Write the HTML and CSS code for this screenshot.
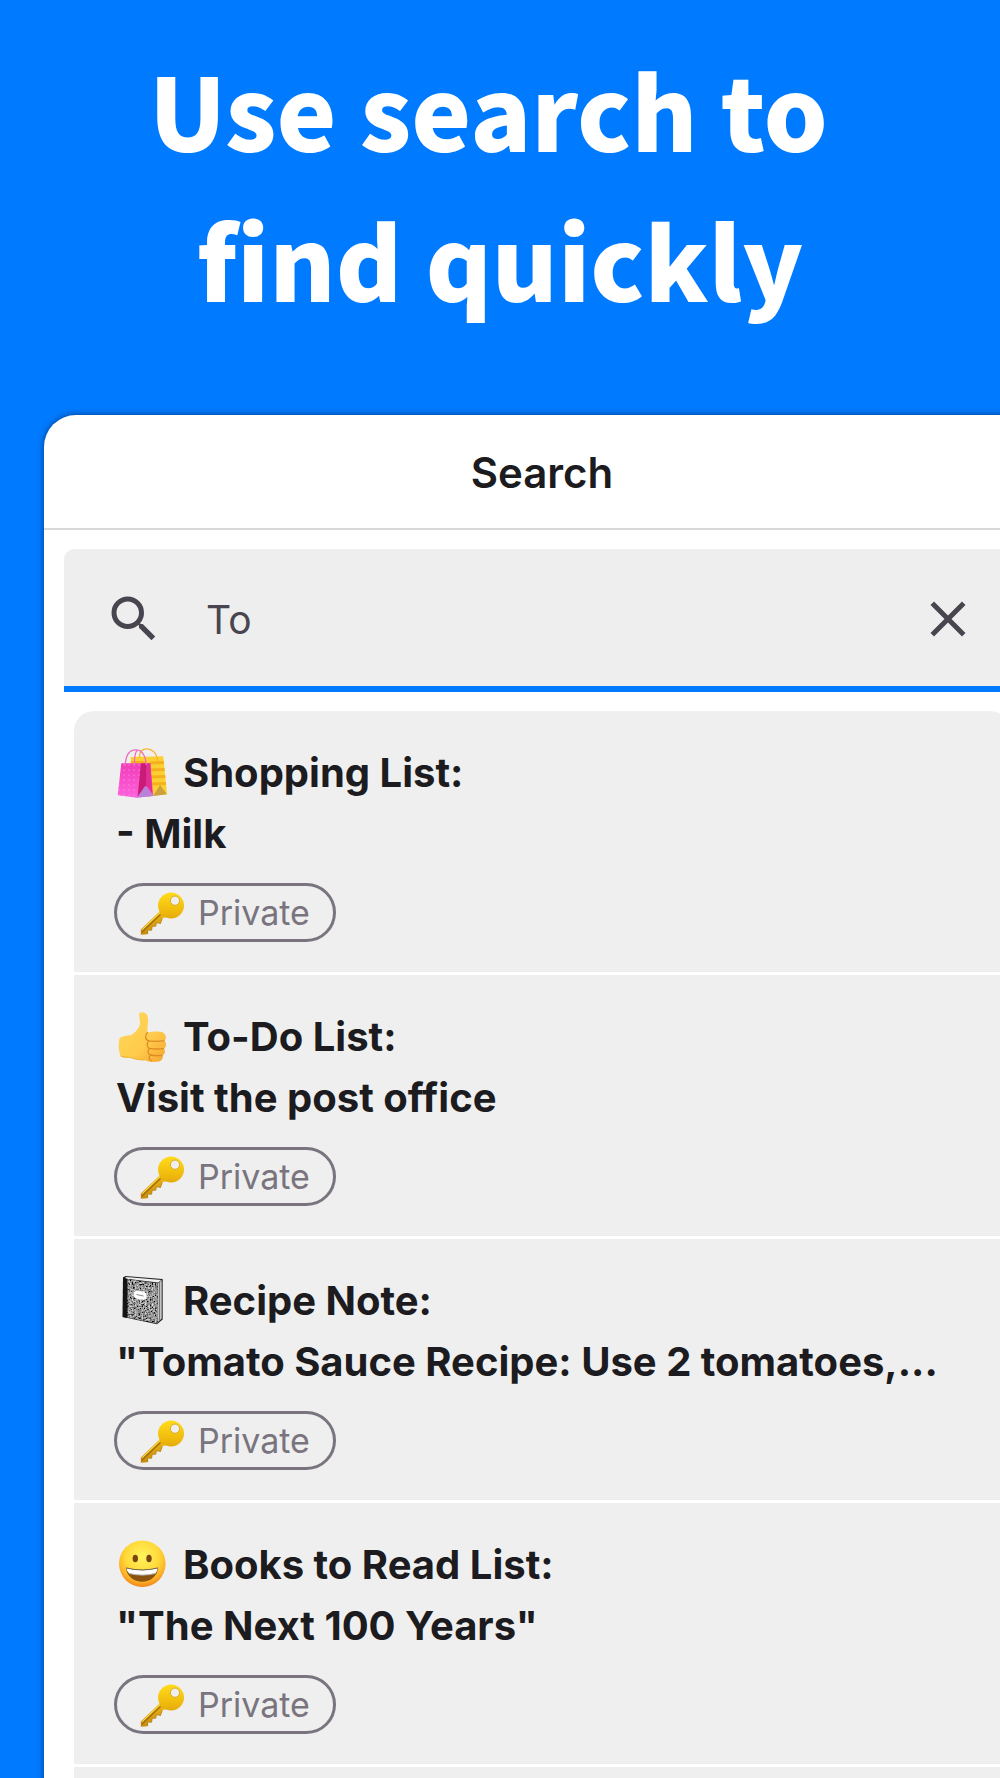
FILE: index.html
```html
<!DOCTYPE html>
<html lang="en">
  <head>
    <meta charset="utf-8">
    <meta name="viewport" content="width=device-width, initial-scale=1">
    <title>Search</title>
    <link rel="stylesheet" href="styles.css">
  </head>
  <body>

    <!-- shared icons -->
    <svg class="sprite" aria-hidden="true">
      <defs>
        <linearGradient id="keyGold" x1="0" y1="0" x2="0" y2="1">
          <stop offset="0" stop-color="#ffdc1c"/>
          <stop offset="0.45" stop-color="#efb90c"/>
          <stop offset="1" stop-color="#c58a12"/>
        </linearGradient>
        <linearGradient id="pinkBag" x1="0" y1="0" x2="0" y2="1">
          <stop offset="0" stop-color="#f03cb8"/>
          <stop offset="1" stop-color="#ff62dc"/>
        </linearGradient>
        <pattern id="dots" width="5" height="5" patternUnits="userSpaceOnUse">
          <circle cx="2" cy="2" r="0.6" fill="#ffb0ee"/>
        </pattern>
        <linearGradient id="thumbSkin" x1="0" y1="0" x2="1" y2="1">
          <stop offset="0" stop-color="#ffd95a"/>
          <stop offset="0.6" stop-color="#ffcb4c"/>
          <stop offset="1" stop-color="#f5a52e"/>
        </linearGradient>
        <radialGradient id="faceFill" cx="0.5" cy="0.35" r="0.66">
          <stop offset="0" stop-color="#fff45c"/>
          <stop offset="0.55" stop-color="#ffd93a"/>
          <stop offset="0.8" stop-color="#fdb327"/>
          <stop offset="1" stop-color="#ee8218"/>
        </radialGradient>
        <filter id="marble" x="0" y="0" width="1" height="1">
          <feTurbulence type="fractalNoise" baseFrequency="0.6" numOctaves="2" seed="4"/>
          <feColorMatrix type="matrix" values="1.5 0 0 0 -0.45  1.5 0 0 0 -0.45  1.5 0 0 0 -0.45  0 0 0 0 1"/>
          <feComposite in2="SourceGraphic" operator="in"/>
        </filter>
      </defs>
      <symbol id="key" viewBox="0 0 44 44">
        <path fill="url(#keyGold)" d="M19.500 20.500 0.800 38.600V43.800L7.700 43.300 8 39 11.500 39.300 12.300 35.300 15.800 35.200 16.400 31.600 20.500 32.500 22.300 26.800 26 26.500A13 13 0 1 0 19.500 20.500Z"/>
        <path fill="none" stroke="#9d6a12" stroke-width="1.200" d="M1.500 41.500 20.500 23.500"/>
        <path fill="none" stroke="#ffe35a" stroke-width="1" d="M2 38.800 20 21.500"/>
        <path fill="none" stroke="#b67b10" stroke-width="0.800" d="M7.700 43V39L11.500 39.300 12.300 35.300 15.800 35.200 16.400 31.600 20.500 32.500 22.300 27"/>
        <circle cx="35" cy="9.700" r="4.600" fill="#efefef" stroke="#d39e0c" stroke-width="0.800"/>
      </symbol>
    </svg>

    <h1 class="headline">Use search to&nbsp;<br>find quickly</h1>

    <main class="sheet">
      <header class="sheet-header">
        <h2>Search</h2>
      </header>

      <form class="search-bar" role="search">
        <label for="searchInput" aria-label="Search notes">
          <svg class="icon" viewBox="0 0 24 24">
            <path fill="currentColor" d="M15.500 14h-.79l-.28-.27A6.470 6.470 0 0 0 16 9.500 6.500 6.500 0 1 0 9.500 16c1.610 0 3.090-.59 4.230-1.570l.27.28v.79l5 4.990L20.490 19l-4.990-5zm-6 0C7.010 14 5 11.990 5 9.500S7.010 5 9.500 5 14 7.010 14 9.500 11.990 14 9.500 14z"/>
          </svg>
        </label>
        <input type="text" id="searchInput" class="search-input" value="To">
        <button type="button" class="clear-button" aria-label="Clear">
          <svg class="icon" viewBox="0 0 24 24">
            <path fill="currentColor" d="M19 6.410 17.590 5 12 10.590 6.410 5 5 6.410 10.590 12 5 17.590 6.410 19 12 13.410 17.590 19 19 17.590 13.410 12z"/>
          </svg>
        </button>
      </form>

      <ul class="results">
        <li class="result">
          <h3 class="result-title">
            <svg class="emoji" viewBox="0 0 50 50" aria-hidden="true">
              <path fill="#fdd032" d="M13.700 9 46.300 8.300 50 46.300 36 48 14 40Z"/>
              <path fill="#f5b01e" d="M33 13.500 46.800 13 47.100 16 33 16.500ZM33 20.500 47.500 20 47.800 23 34 23.500ZM34 27.500 48.200 27 48.500 30 34 30.500ZM35 34.500 48.900 34 49.100 37 35 37.500ZM14 13h15v2H14Z"/>
              <path fill="#c9a23c" d="M36 48 43 37 50 46.300Z"/>
              <path fill="none" stroke="#fbb42c" stroke-width="1.300" d="M22.500 10C22 3 26 .8 30 .8S40 4 40.700 13"/>
              <path fill="url(#pinkBag)" d="M4.300 15.300 33.300 15.300 36.300 48 19.700 49.700 .7 47.300Z"/>
              <path fill="url(#dots)" d="M4.300 15.300H24L20 49.700 .7 47.300Z"/>
              <path fill="#c91c78" d="M24 15.300H29.500L30 38 20.500 49Z"/>
              <path fill="#e22f95" d="M29.500 15.300H33.300L35.500 46 29 37Z"/>
              <path fill="#b882d8" d="M20 49.600 28.500 37.500 36.300 48Z"/>
              <path fill="none" stroke="#ef6cbc" stroke-width="1.300" d="M8.300 18C8.500 8 12 2 18.500 1.800S28.500 8 29.300 17M17.500 17C17.500 8 18 3 20.500 2.500"/>
            </svg>
            Shopping List:
          </h3>
          <p class="result-text">- Milk</p>
          <span class="tag"><svg class="tag-icon" aria-hidden="true"><use href="#key"/></svg>Private</span>
        </li>

        <li class="result">
          <h3 class="result-title">
            <svg class="emoji" viewBox="0 0 50 50" aria-hidden="true">
              <path fill="url(#thumbSkin)" d="M22 2C23-.5 28-.5 30 3 32.500 8 30 14 30.300 20L32 20.500C36 19 44 19.300 46 20.500 49.500 22.500 49.300 27 47.500 28.800 49.800 31 49.500 35 47 36.700 48.800 39 48 42.500 45.500 43.500 46.500 46 45 49 42 49.500 37 50.500 31 50 27 48 20 48.500 17 46 12 45.500 8 46 5.500 46 3.700 44 1.500 40 1 32 2.500 26.500 4.500 24 10 23.500 14 23.300 19 20 23.500 15 23 10Z"/>
              <path fill="none" stroke="#dd8d22" stroke-width="1.300" stroke-linecap="round" d="M30.500 20.500C27.500 23 28 28 32 28.900 37 29.600 43 29.300 47 28.900M32 28.900C29.500 31 29.500 35 32.500 36.400 37 37.200 43 37 46.500 36.700M32.500 36.400C30.300 38 30.500 42 33.500 43 37 43.800 42 43.700 45 43.500M33.500 43C31.500 44.500 31.800 48 34.500 49"/>
              <path fill="none" stroke="#f3b236" stroke-width="1.200" stroke-linecap="round" d="M4 44C8 46 12 44.500 16 46.300S24 47.500 27 48"/>
            </svg>
            To-Do List:
          </h3>
          <p class="result-text">Visit the post office</p>
          <span class="tag"><svg class="tag-icon" aria-hidden="true"><use href="#key"/></svg>Private</span>
        </li>

        <li class="result">
          <h3 class="result-title">
            <svg class="emoji" viewBox="0 0 50 50" aria-hidden="true">
              <path fill="#252525" d="M6 1.500 8.500 0 45.700 3V43.500L40 48.300 5.700 41Z"/>
              <path fill="#f0f0f0" d="M9 1 44.500 4 41 6.500 8 2.500Z"/>
              <path fill="#c4c4c4" d="M40.500 7.500 44.700 4.500V42.500L40.500 46.500Z"/>
              <path fill="#777" d="M42 6.500 43 5.800V44L42 45Z"/>
              <path fill="#666" filter="url(#marble)" d="M10 3 40.500 7.500V47.500L10 41.500Z"/>
              <path fill="#141414" d="M6 1.500 10.500 3V42L5.700 41Z"/>
              <path fill="#fff" d="M19 14.500 27 15.500Q28 17 29.500 17.300V23Q28 23 27.200 24L19 22.500Q18 21 16.500 20.500V16Q18 16 19 14.500Z"/>
              <path stroke="#888" stroke-width="1" d="M19.500 18.500 26.500 20"/>
            </svg>
            Recipe Note:
          </h3>
          <p class="result-text">"Tomato Sauce Recipe: Use 2 tomatoes,...</p>
          <span class="tag"><svg class="tag-icon" aria-hidden="true"><use href="#key"/></svg>Private</span>
        </li>

        <li class="result">
          <h3 class="result-title">
            <svg class="emoji" viewBox="0 0 50 50" aria-hidden="true">
              <circle cx="25.300" cy="23.700" r="23.300" fill="url(#faceFill)"/>
              <ellipse cx="18.300" cy="18.500" rx="2.700" ry="3.800" fill="#7a4410"/>
              <ellipse cx="32" cy="18.500" rx="2.700" ry="3.800" fill="#7a4410"/>
              <path fill="#8a5410" d="M9 28Q25.300 32 41 28C40.500 36.500 33 41.800 25.200 41.800S9.500 36.500 9 28Z"/>
              <path fill="#fff" d="M9.500 28.300Q25.300 32 40.500 28.300 40.300 31.500 38.500 33.300 25 36.500 12 33.300 9.800 31.500 9.500 28.300Z"/>
              <path fill="none" stroke="#6f5a4c" stroke-width="0.900" d="M9 27.900Q25.300 32 41 27.900"/>
              <path fill="none" stroke="#b9bcc4" stroke-width="0.900" d="M12 33.500Q25 36.700 38.500 33.500"/>
            </svg>
            Books to Read List:
          </h3>
          <p class="result-text">"The Next 100 Years"</p>
          <span class="tag"><svg class="tag-icon" aria-hidden="true"><use href="#key"/></svg>Private</span>
        </li>

        <li class="result"></li>
      </ul>
    </main>

  </body>
</html>
```

FILE: styles.css
```css
* {
  box-sizing: border-box;
}

html {
  height: 100%;
}

body {
  margin: 0;
  height: 100%;
  overflow: hidden;
  display: flex;
  flex-direction: column;
  background-color: #007aff;
  color: #1c1b20;
  font-family: Inter, "Liberation Sans", sans-serif;
}

h1, h2, h3, p {
  margin: 0;
}

.sprite {
  position: absolute;
  width: 0;
  height: 0;
}

.headline {
  padding: 33px 0 82px;
  color: #fff;
  font-family: "Noto Sans CJK SC", "Noto Sans", sans-serif;
  font-size: 101px;
  font-weight: 900;
  line-height: 150px;
  text-align: center;
}

/* the sheet runs off the right and bottom edges */
.sheet {
  flex: 1 0 auto;
  margin: 0 -40px 0 44px;
  background-color: #fff;
  border-radius: 32px 32px 0 0;
  box-shadow: 0 0 6px rgba(0, 0, 0, 0.5);
}

.sheet-header {
  padding: 29px 0 27px;
  border-bottom: 2px solid #d8d8d8;
  text-align: center;
}

.sheet-header h2 {
  font-size: 42px;
  font-weight: 600;
  line-height: 57px;
}

.search-bar {
  display: flex;
  align-items: center;
  height: 143px;
  margin: 19px 20px 19px;
  padding: 2px 42px 0 40px;
  background-color: #eee;
  border-bottom: 6px solid #007aff;
  border-radius: 10px 10px 0 0;
  color: #49454f;
}

.icon {
  display: block;
  width: 60px;
  height: 60px;
}

.search-input {
  flex: 1;
  min-width: 0;
  margin: 0 40px 0 42px;
  padding: 2px 0 0;
  border: none;
  outline: none;
  background: none;
  color: #49454f;
  font-family: inherit;
  font-size: 39px;
}

.clear-button {
  padding: 0;
  border: none;
  background: none;
  color: #49454f;
  cursor: pointer;
}

.results {
  margin: 0 30px;
  padding: 0;
  list-style: none;
  background-color: #efefef;
  border-radius: 20px;
}

.result {
  padding: 31px 40px 30px 42px;
  border-bottom: 3px solid #fff;
}

.result-title,
.result-text {
  font-size: 40px;
  font-weight: 700;
  line-height: 61px;
}

.result-title {
  display: flex;
  align-items: center;
  gap: 16px;
}

.result-text {
  overflow: hidden;
  text-overflow: ellipsis;
  white-space: nowrap;
}

.emoji {
  width: 50px;
  height: 50px;
  margin-left: 1px;
}

.tag {
  display: flex;
  align-items: center;
  gap: 14px;
  width: max-content;
  height: 59px;
  margin: 19px 0 0 -2px;
  padding: 0 23px;
  border: 3px solid #79747e;
  border-radius: 30px;
  color: #79747e;
  font-size: 34px;
}

.tag-icon {
  width: 44px;
  height: 44px;
}
```
